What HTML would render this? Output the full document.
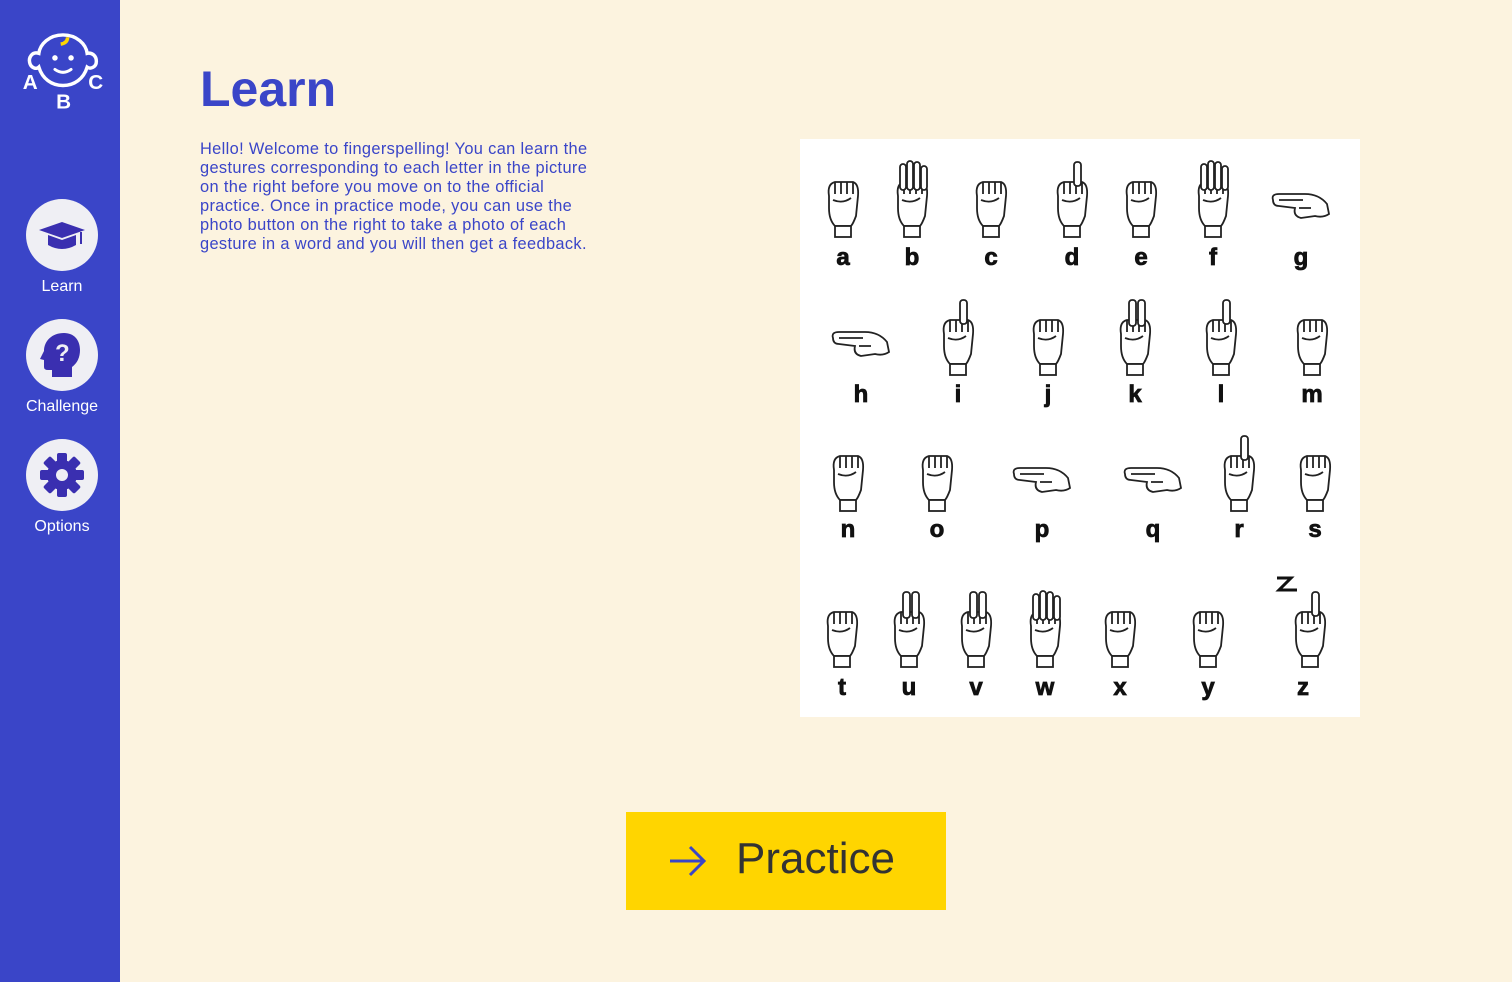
<!DOCTYPE html>
<html><head><meta charset="utf-8"><style>
*{margin:0;padding:0;box-sizing:border-box}
body{width:1512px;height:982px;background:#fcf3df;font-family:"Liberation Sans",sans-serif;position:relative;overflow:hidden}
.side{position:absolute;left:0;top:0;width:120px;height:982px;background:#3a45c8}
.nav{position:absolute;left:26px;width:72px;height:72px;border-radius:50%;background:#efeff4}
.lbl{position:absolute;width:124px;left:0;text-align:center;color:#fff;font-size:16px}
h1{position:absolute;left:200px;top:60px;color:#3a45c8;font-size:50px;font-weight:bold}
p.t{position:absolute;left:200px;top:139px;white-space:nowrap;color:#3a45c8;font-size:16.4px;line-height:19px;letter-spacing:0.35px}
.chart{position:absolute;left:800px;top:139px;width:560px;height:578px;background:#fff}
.L{position:absolute;font-weight:900;font-size:24px;color:#111;transform:translate(-50%,-50%);-webkit-text-stroke:0.8px #111}
.H{position:absolute;width:44px;height:80px;transform:translateX(-50%)}
.btn{position:absolute;left:626px;top:812px;width:320px;height:98px;background:#ffd500}
.btn span{position:absolute;left:110px;top:22px;font-size:44px;color:#333}
</style></head><body>
<svg width="0" height="0" style="position:absolute">
<defs>
<g id="fist" fill="#fff" stroke="#222" stroke-width="1.8"><path d="M8 36 Q6 24 14 22 L32 22 Q38 24 37 36 L35 56 Q32 64 30 66 L14 66 Q8 60 8 48 Z"/><path d="M14 22 V34 M20 22 V34 M26 22 V34 M32 22 V34 M12 40 Q22 44 30 38"/><rect x="14" y="66" width="16" height="11"/></g>
<g id="one" fill="#fff" stroke="#222" stroke-width="1.8"><use href="#fist"/><rect x="24" y="2" width="7" height="24" rx="3"/></g>
<g id="two" fill="#fff" stroke="#222" stroke-width="1.8"><use href="#fist"/><rect x="16" y="2" width="7" height="26" rx="3"/><rect x="25" y="2" width="7" height="26" rx="3"/></g>
<g id="open" fill="#fff" stroke="#222" stroke-width="1.8"><use href="#fist"/><rect x="10" y="4" width="6" height="26" rx="3"/><rect x="17" y="1" width="6" height="29" rx="3"/><rect x="24" y="2" width="6" height="28" rx="3"/><rect x="31" y="6" width="6" height="24" rx="3"/></g>
<g id="hor" fill="#fff" stroke="#222" stroke-width="1.8"><path d="M-6 40 Q-8 34 0 34 L26 34 Q40 34 48 44 L50 54 Q44 58 36 56 L22 58 Q14 56 16 48 L0 46 Q-6 46 -6 40 Z"/><path d="M0 40 H24 M20 48 H32"/></g>
</defs></svg>
<div class="side">
<svg style="position:absolute;left:17px;top:28px" width="92" height="84" viewBox="0 0 80 73">
<path d="M40 6 C28 6 20 14 19 22 C13 20 10 26 11 30 C12 35 17 36 19 34 C22 44 30 50 40 50 C50 50 58 44 61 34 C64 36 69 34 69 29 C69 24 65 21 61 22 C60 14 52 6 40 6 Z" fill="none" stroke="#fff" stroke-width="3"/>
<path d="M38 14 Q44 13 44 8" fill="none" stroke="#ffd500" stroke-width="3"/>
<circle cx="33" cy="26" r="2.4" fill="#fff"/><circle cx="47" cy="26" r="2.4" fill="#fff"/>
<path d="M33 36 Q40 41 47 36" fill="none" stroke="#fff" stroke-width="2.6" stroke-linecap="round"/>
<text x="5" y="53" fill="#fff" font-family="Liberation Sans" font-weight="bold" font-size="18">A</text>
<text x="34" y="70" fill="#fff" font-family="Liberation Sans" font-weight="bold" font-size="18">B</text>
<text x="62" y="53" fill="#fff" font-family="Liberation Sans" font-weight="bold" font-size="18">C</text>
</svg>
<div class="nav" style="top:199px"><svg width="72" height="72" viewBox="0 0 72 72"><path d="M13 31 L36 23 L59 31 L36 39 Z" fill="#3a2fb0"/><path d="M22 36 V46 Q36 54 50 46 V36 L36 41 Z" fill="#3a2fb0"/><path d="M55 33 V45" stroke="#3a2fb0" stroke-width="2"/></svg></div>
<div class="lbl" style="top:278px">Learn</div>
<div class="nav" style="top:319px"><svg width="72" height="72" viewBox="0 0 72 72"><path d="M38 14 C26 14 18 22 18 32 L14 40 L18 41 L18 48 Q18 51 22 51 L26 51 L26 58 L46 58 L46 48 Q54 42 54 31 C54 21 48 14 38 14 Z" fill="#3a2fb0"/><text x="29" y="42" fill="#efeff4" font-family="Liberation Sans" font-weight="bold" font-size="24">?</text></svg></div>
<div class="lbl" style="top:398px">Challenge</div>
<div class="nav" style="top:439px"><svg width="72" height="72" viewBox="0 0 72 72"><g transform="translate(36 36)" fill="#3a2fb0"><circle r="15"/><g id="tt"><rect x="-5" y="-22" width="10" height="10" rx="2"/></g><use href="#tt" transform="rotate(45)"/><use href="#tt" transform="rotate(90)"/><use href="#tt" transform="rotate(135)"/><use href="#tt" transform="rotate(180)"/><use href="#tt" transform="rotate(225)"/><use href="#tt" transform="rotate(270)"/><use href="#tt" transform="rotate(315)"/><circle r="6" fill="#efeff4"/></g></svg></div>
<div class="lbl" style="top:518px">Options</div>
</div>
<h1>Learn</h1>
<p class="t" style="top:140px">Hello! Welcome to fingerspelling! You can learn the<br>gestures corresponding to each letter in the picture<br>on the right before you move on to the official<br>practice. Once in practice mode, you can use the<br>photo button on the right to take a photo of each<br>gesture in a word and you will then get a feedback.</p>
<div class="chart"></div>
<div id="c" style="position:absolute;left:0;top:0">
<svg class="H" style="left:843px;top:160px" viewBox="0 0 44 80"><use href="#fist"/></svg><div class="L" style="left:843px;top:258px">a</div>
<svg class="H" style="left:912px;top:160px" viewBox="0 0 44 80"><use href="#open"/></svg><div class="L" style="left:912px;top:258px">b</div>
<svg class="H" style="left:991px;top:160px" viewBox="0 0 44 80"><use href="#fist"/></svg><div class="L" style="left:991px;top:258px">c</div>
<svg class="H" style="left:1072px;top:160px" viewBox="0 0 44 80"><use href="#one"/></svg><div class="L" style="left:1072px;top:258px">d</div>
<svg class="H" style="left:1141px;top:160px" viewBox="0 0 44 80"><use href="#fist"/></svg><div class="L" style="left:1141px;top:258px">e</div>
<svg class="H" style="left:1213px;top:160px" viewBox="0 0 44 80"><use href="#open"/></svg><div class="L" style="left:1213px;top:258px">f</div>
<svg class="H" style="left:1301px;top:160px" viewBox="0 0 44 80" overflow="visible"><use href="#hor"/></svg><div class="L" style="left:1301px;top:258px">g</div>
<svg class="H" style="left:861px;top:298px" viewBox="0 0 44 80" overflow="visible"><use href="#hor"/></svg><div class="L" style="left:861px;top:395px">h</div>
<svg class="H" style="left:958px;top:298px" viewBox="0 0 44 80"><use href="#one"/></svg><div class="L" style="left:958px;top:395px">i</div>
<svg class="H" style="left:1048px;top:298px" viewBox="0 0 44 80"><use href="#fist"/></svg><div class="L" style="left:1048px;top:395px">j</div>
<svg class="H" style="left:1135px;top:298px" viewBox="0 0 44 80"><use href="#two"/></svg><div class="L" style="left:1135px;top:395px">k</div>
<svg class="H" style="left:1221px;top:298px" viewBox="0 0 44 80"><use href="#one"/></svg><div class="L" style="left:1221px;top:395px">l</div>
<svg class="H" style="left:1312px;top:298px" viewBox="0 0 44 80"><use href="#fist"/></svg><div class="L" style="left:1312px;top:395px">m</div>
<svg class="H" style="left:848px;top:434px" viewBox="0 0 44 80"><use href="#fist"/></svg><div class="L" style="left:848px;top:530px">n</div>
<svg class="H" style="left:937px;top:434px" viewBox="0 0 44 80"><use href="#fist"/></svg><div class="L" style="left:937px;top:530px">o</div>
<svg class="H" style="left:1042px;top:434px" viewBox="0 0 44 80" overflow="visible"><use href="#hor"/></svg><div class="L" style="left:1042px;top:530px">p</div>
<svg class="H" style="left:1153px;top:434px" viewBox="0 0 44 80" overflow="visible"><use href="#hor"/></svg><div class="L" style="left:1153px;top:530px">q</div>
<svg class="H" style="left:1239px;top:434px" viewBox="0 0 44 80"><use href="#one"/></svg><div class="L" style="left:1239px;top:530px">r</div>
<svg class="H" style="left:1315px;top:434px" viewBox="0 0 44 80"><use href="#fist"/></svg><div class="L" style="left:1315px;top:530px">s</div>
<svg class="H" style="left:842px;top:590px" viewBox="0 0 44 80"><use href="#fist"/></svg><div class="L" style="left:842px;top:688px">t</div>
<svg class="H" style="left:909px;top:590px" viewBox="0 0 44 80"><use href="#two"/></svg><div class="L" style="left:909px;top:688px">u</div>
<svg class="H" style="left:976px;top:590px" viewBox="0 0 44 80"><use href="#two"/></svg><div class="L" style="left:976px;top:688px">v</div>
<svg class="H" style="left:1045px;top:590px" viewBox="0 0 44 80"><use href="#open"/></svg><div class="L" style="left:1045px;top:688px">w</div>
<svg class="H" style="left:1120px;top:590px" viewBox="0 0 44 80"><use href="#fist"/></svg><div class="L" style="left:1120px;top:688px">x</div>
<svg class="H" style="left:1208px;top:590px" viewBox="0 0 44 80"><use href="#fist"/></svg><div class="L" style="left:1208px;top:688px">y</div>
<svg class="H" style="left:1310px;top:590px" viewBox="0 0 44 80"><use href="#one"/></svg><div class="L" style="left:1303px;top:688px">z</div>
<svg style="position:absolute;left:1275px;top:575px" width="30" height="22"><path d="M2 3 H16 L4 15 H22" fill="none" stroke="#111" stroke-width="3"/></svg>
</div>
<div class="btn"><svg style="position:absolute;left:42px;top:30px" width="40" height="38" viewBox="0 0 40 38"><path d="M2 19 H36 M22 5 L36 19 L22 33" fill="none" stroke="#3a45c8" stroke-width="3"/></svg><span>Practice</span></div>
</body></html>
